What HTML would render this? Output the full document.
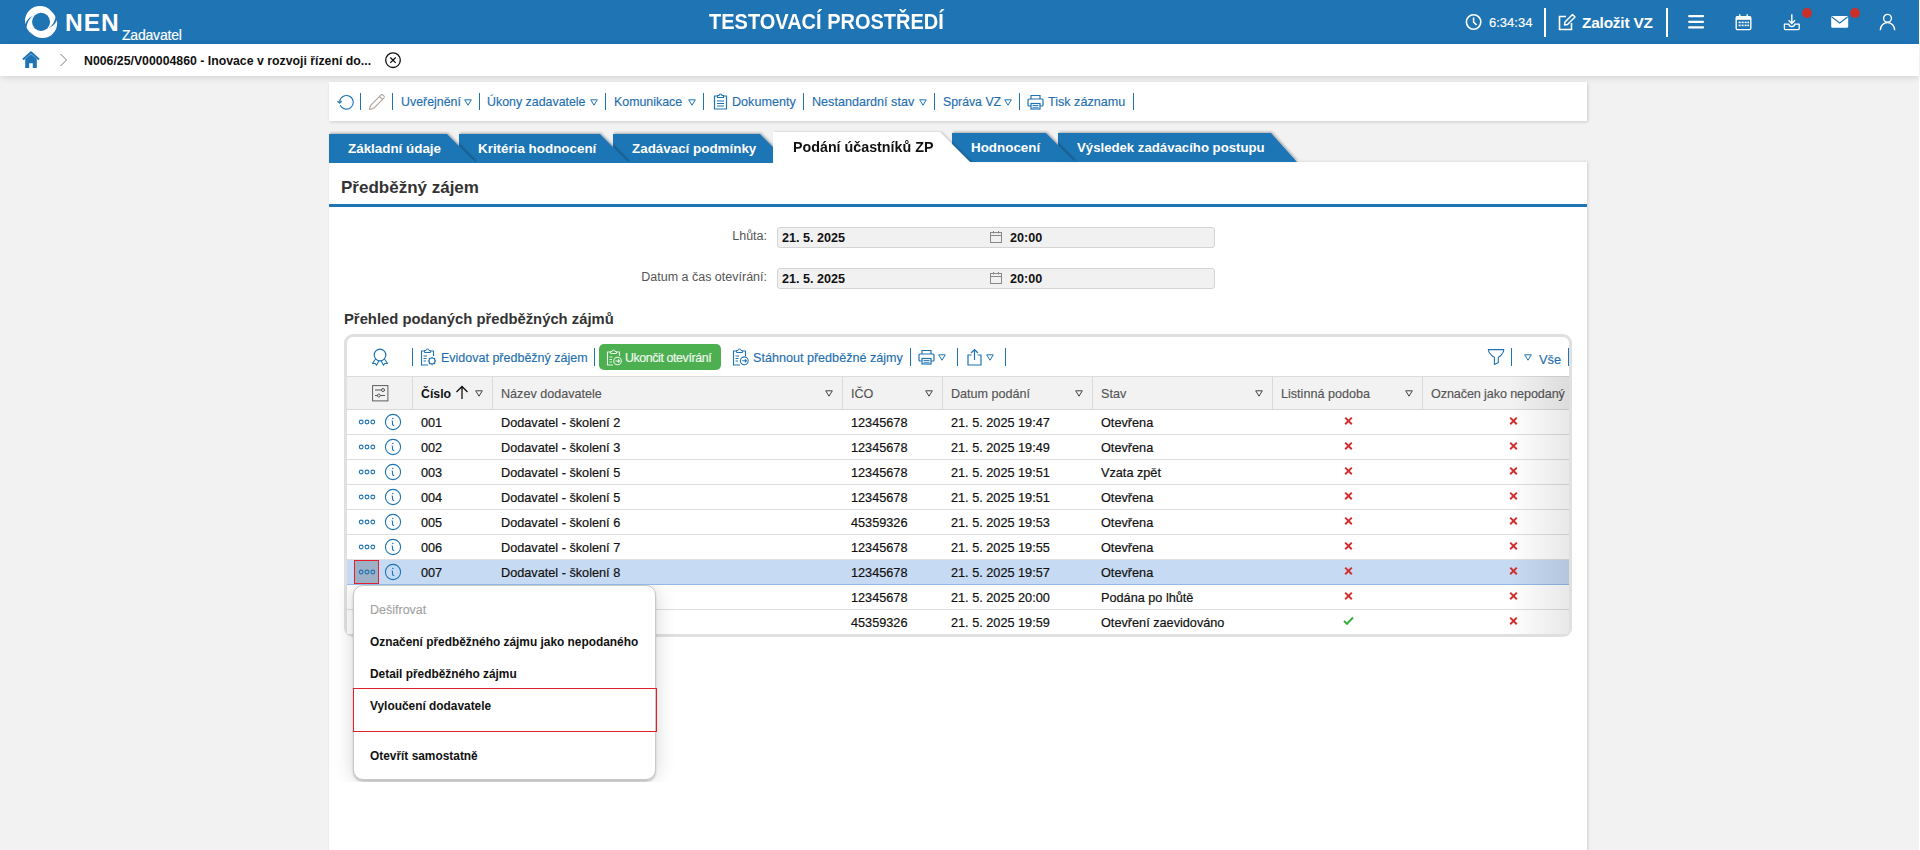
<!DOCTYPE html>
<html><head><meta charset="utf-8">
<style>
*{box-sizing:border-box;margin:0;padding:0}
html,body{width:1920px;height:850px;overflow:hidden}
body{background:#f2f2f2;font-family:"Liberation Sans",sans-serif;position:relative;color:#111}
.a{position:absolute;white-space:nowrap;line-height:normal}
.r{-webkit-text-stroke:0.2px currentColor}
</style></head>
<body>
<div class="a" style="left:0;top:0;width:1919px;height:44px;background:#1f74b4"></div>
<div class="a" style="left:1919px;top:0;width:1px;height:850px;background:#fff"></div>
<div class="a" style="left:0;top:44px;width:1919px;height:32px;background:#fff;box-shadow:0 2px 6px rgba(0,0,0,.12)"></div>
<svg class="a" style="left:0;top:0" width="70" height="44">
  <circle cx="40.0" cy="21.07" r="15.07" fill="#fff"/>
  <circle cx="42.46" cy="23.33" r="14.69" fill="#fff"/>
  <path id="lg" d="M24.4 26.8Q25.6 19.2 33.4 15.4Q27.3 19.8 26.2 28.4L25.2 30.5Z" fill="#1f74b4"/>
  <path d="M24.4 26.8Q25.6 19.2 33.4 15.4Q27.3 19.8 26.2 28.4L25.2 30.5Z" fill="#1f74b4" transform="rotate(180 41.05 21.87)"/>
  <circle cx="41.05" cy="21.87" r="9.04" fill="#1f74b4"/>
</svg>
<div class="a" style="left:65px;top:9px;font-size:24.5px;color:#fff;font-weight:bold;letter-spacing:1px">NEN</div>
<div class="a" style="left:122px;top:27px;font-size:14px;color:#fff;font-weight:normal;letter-spacing:-0.2px;-webkit-text-stroke:0.15px #fff">Zadavatel</div>
<div class="a" style="left:709px;top:10px;font-size:21.5px;color:#fff;font-weight:bold;transform:scaleX(0.93);transform-origin:0 0">TESTOVACÍ PROSTŘEDÍ</div>
<svg class="a" style="left:1465px;top:13px" width="18" height="18" viewBox="0 0 18 18"><circle cx="8.6" cy="9" r="7.2" stroke="#fff" stroke-width="1.6" fill="none"/><path d="M8.6 4.6V9.2L11.6 12" stroke="#fff" stroke-width="1.6" fill="none"/></svg>
<div class="a" style="left:1489px;top:15px;font-size:13px;color:#fff;font-weight:normal;;-webkit-text-stroke:0.15px #fff">6:34:34</div>
<div class="a" style="left:1544px;top:8px;width:2px;height:29px;background:#fff"></div>
<svg class="a" style="left:1557px;top:13px" width="20" height="18" viewBox="0 0 20 18"><path d="M9 3.5H2.5V16.5H14.5V10" stroke="#fff" stroke-width="1.6" fill="none"/><path d="M7.5 12L8 9 15.5 1.5 18 4 10.5 11.5Z" stroke="#fff" stroke-width="1.5" fill="none" stroke-linejoin="round"/></svg>
<div class="a" style="left:1582px;top:14px;font-size:15.4px;color:#fff;font-weight:bold;letter-spacing:-0.2px">Založit VZ</div>
<div class="a" style="left:1666px;top:8px;width:2px;height:29px;background:#fff"></div>
<svg class="a" style="left:1687px;top:14px" width="18" height="16" viewBox="0 0 18 16"><path d="M2.2 2.2H16M2.2 7.8H16M2.2 13.4H16" stroke="#fff" stroke-width="2.3" stroke-linecap="round"/></svg>
<svg class="a" style="left:1735px;top:13px" width="17" height="18" viewBox="0 0 17 18"><rect x="1.2" y="3.6" width="14.6" height="13" rx="1.3" fill="none" stroke="#fff" stroke-width="1.4"/><rect x="1.2" y="3.6" width="14.6" height="3.2" fill="#fff"/><path d="M4.8 1.2V4.5M12.2 1.2V4.5" stroke="#fff" stroke-width="1.4"/><g fill="#fff"><rect x="3.6" y="8.6" width="2" height="1.6"/><rect x="6.6" y="8.6" width="2" height="1.6"/><rect x="9.6" y="8.6" width="2" height="1.6"/><rect x="12.4" y="8.6" width="1.6" height="1.6"/><rect x="3.6" y="11.6" width="2" height="1.6"/><rect x="6.6" y="11.6" width="2" height="1.6"/><rect x="9.6" y="11.6" width="2" height="1.6"/><rect x="12.4" y="11.6" width="1.6" height="1.6"/></g></svg>
<svg class="a" style="left:1783px;top:13px" width="18" height="18" viewBox="0 0 18 18"><path d="M8.8 1.2V10.2M5.6 7.2L8.8 10.4 12 7.2" stroke="#fff" stroke-width="1.4" fill="none"/><path d="M1.4 11.2V15.6Q1.4 16.6 2.4 16.6H15.2Q16.2 16.6 16.2 15.6V11.2H11.8Q11.5 13.6 8.8 13.6 6.1 13.6 5.8 11.2Z" stroke="#fff" stroke-width="1.3" fill="none" stroke-linejoin="round"/></svg>
<div class="a" style="left:1802px;top:8px;width:10px;height:10px;border-radius:50%;background:#c9302c"></div>
<svg class="a" style="left:1831px;top:15px" width="18" height="14" viewBox="0 0 18 14"><rect x="0.2" y="1" width="17" height="11.8" rx="1.5" fill="#fff"/><path d="M0.8 2L8.7 8 16.6 2" stroke="#1f74b4" stroke-width="1.2" fill="none"/></svg>
<div class="a" style="left:1850px;top:8px;width:10px;height:10px;border-radius:50%;background:#c9302c"></div>
<svg class="a" style="left:1879px;top:13px" width="17" height="18" viewBox="0 0 17 18"><circle cx="8.5" cy="5.3" r="3.9" stroke="#fff" stroke-width="1.4" fill="none"/><path d="M1.3 17.2A7.2 7.6 0 0 1 15.7 17.2" stroke="#fff" stroke-width="1.4" fill="none"/></svg>
<svg class="a" style="left:22px;top:51px" width="18" height="18" viewBox="0 0 18 18"><path d="M1 8.5L9 1.2 17 8.5" stroke="#1f74b4" stroke-width="2" fill="none" stroke-linejoin="round"/><path d="M3.2 8V17H7.2V12.2H10.8V17H14.8V8L9 3Z" fill="#1f74b4"/></svg>
<svg class="a" style="left:59px;top:53px" width="10" height="14" viewBox="0 0 10 14"><path d="M1.5 1L7.5 7 1.5 13" stroke="#777" stroke-width="1" fill="none"/></svg>
<div class="a" style="left:84px;top:54px;font-size:12.3px;color:#111;font-weight:bold;">N006/25/V00004860 - Inovace v rozvoji řízení do...</div>
<svg class="a" style="left:384px;top:51px" width="18" height="18" viewBox="0 0 18 18"><circle cx="9" cy="9.2" r="7.3" stroke="#111" stroke-width="1.3" fill="none"/><path d="M6.3 6.5L11.7 11.9M11.7 6.5L6.3 11.9" stroke="#111" stroke-width="1.3"/></svg>
<div class="a" style="left:329px;top:82px;width:1258px;height:39px;background:#fff;box-shadow:1px 1px 3px rgba(0,0,0,0.16)"></div>
<svg class="a" style="left:336px;top:93px" width="18" height="18" viewBox="0 0 18 18"><path d="M3.7 8.2A6.8 6.8 0 1 1 4.2 12.1" stroke="#1f74b4" stroke-width="1.1" fill="none"/><path d="M1.2 8.4L3.7 10.6 6 8.4Z" fill="#1f74b4" stroke="#1f74b4" stroke-width="0.6" stroke-linejoin="round"/></svg>
<div class="a" style="left:360px;top:93px;width:1px;height:17px;background:#1f74b4"></div>
<svg class="a" style="left:368px;top:93px" width="18" height="18" viewBox="0 0 18 18"><path d="M1.5 16.5L2.5 12.5 12.8 2.2Q14 1 15.3 2.3L15.7 2.7Q17 4 15.8 5.2L5.5 15.5Z M11.5 3.5L14.5 6.5" stroke="#b0a8a0" stroke-width="1.1" fill="none" stroke-linejoin="round"/></svg>
<div class="a" style="left:392px;top:93px;width:1px;height:17px;background:#1f74b4"></div>
<div class="a" style="left:401px;top:95px;font-size:12.4px;color:#1f6fb0;font-weight:normal;;-webkit-text-stroke:0.15px #1f6fb0">Uveřejnění</div>
<svg class="a" style="left:464px;top:99px" width="8" height="7" viewBox="0 0 8 7"><path d="M0.7 0.8H7.3L4 6.2Z" stroke="#1f74b4" stroke-width="1" fill="none"/></svg>
<div class="a" style="left:479px;top:93px;width:1px;height:17px;background:#1f74b4"></div>
<div class="a" style="left:487px;top:95px;font-size:12.4px;color:#1f6fb0;font-weight:normal;;-webkit-text-stroke:0.15px #1f6fb0">Úkony zadavatele</div>
<svg class="a" style="left:590px;top:99px" width="8" height="7" viewBox="0 0 8 7"><path d="M0.7 0.8H7.3L4 6.2Z" stroke="#1f74b4" stroke-width="1" fill="none"/></svg>
<div class="a" style="left:605px;top:93px;width:1px;height:17px;background:#1f74b4"></div>
<div class="a" style="left:614px;top:95px;font-size:12.4px;color:#1f6fb0;font-weight:normal;;-webkit-text-stroke:0.15px #1f6fb0">Komunikace</div>
<svg class="a" style="left:688px;top:99px" width="8" height="7" viewBox="0 0 8 7"><path d="M0.7 0.8H7.3L4 6.2Z" stroke="#1f74b4" stroke-width="1" fill="none"/></svg>
<div class="a" style="left:703px;top:93px;width:1px;height:17px;background:#1f74b4"></div>
<svg class="a" style="left:713px;top:93px" width="15" height="17" viewBox="0 0 15 17"><path d="M4.5 3H1.5V16H13.5V3H10.5" stroke="#1f74b4" stroke-width="1.2" fill="none"/><path d="M4.5 4.5V2.5H6A1.5 1.5 0 0 1 9 2.5H10.5V4.5Z" stroke="#1f74b4" stroke-width="1.1" fill="none"/><path d="M4 8H11M4 10.5H11M4 13H11" stroke="#1f74b4" stroke-width="1.1"/></svg>
<div class="a" style="left:732px;top:95px;font-size:12.6px;color:#1f6fb0;font-weight:normal;;-webkit-text-stroke:0.15px #1f6fb0">Dokumenty</div>
<div class="a" style="left:803px;top:93px;width:1px;height:17px;background:#1f74b4"></div>
<div class="a" style="left:812px;top:95px;font-size:12.6px;color:#1f6fb0;font-weight:normal;;-webkit-text-stroke:0.15px #1f6fb0">Nestandardní stav</div>
<svg class="a" style="left:919px;top:99px" width="8" height="7" viewBox="0 0 8 7"><path d="M0.7 0.8H7.3L4 6.2Z" stroke="#1f74b4" stroke-width="1" fill="none"/></svg>
<div class="a" style="left:934px;top:93px;width:1px;height:17px;background:#1f74b4"></div>
<div class="a" style="left:943px;top:95px;font-size:12.3px;color:#1f6fb0;font-weight:normal;;-webkit-text-stroke:0.15px #1f6fb0">Správa VZ</div>
<svg class="a" style="left:1004px;top:99px" width="8" height="7" viewBox="0 0 8 7"><path d="M0.7 0.8H7.3L4 6.2Z" stroke="#1f74b4" stroke-width="1" fill="none"/></svg>
<div class="a" style="left:1019px;top:93px;width:1px;height:17px;background:#1f74b4"></div>
<svg class="a" style="left:1027px;top:94px" width="17" height="16" viewBox="0 0 17 16"><path d="M4 5V1.5H13V5" stroke="#1f74b4" stroke-width="1.2" fill="none"/><rect x="1" y="5" width="15" height="7" rx="1" stroke="#1f74b4" stroke-width="1.2" fill="none"/><rect x="4" y="9.5" width="9" height="5.5" stroke="#1f74b4" stroke-width="1.2" fill="#fff"/><path d="M5.5 11.5H11.5M5.5 13.3H11.5" stroke="#1f74b4" stroke-width="0.9"/></svg>
<div class="a" style="left:1048px;top:95px;font-size:12.6px;color:#1f6fb0;font-weight:normal;;-webkit-text-stroke:0.15px #1f6fb0">Tisk záznamu</div>
<div class="a" style="left:1133px;top:93px;width:1px;height:17px;background:#1f74b4"></div>
<div class="a" style="left:329px;top:162px;width:1258px;height:700px;background:#fff;box-shadow:1px 0 3px rgba(0,0,0,0.14)"></div>
<svg class="a" style="left:320px;top:120px" width="1000" height="43" viewBox="320 120 1000 43">
  <defs><filter id="ds" x="-10%" y="-50%" width="120%" height="200%"><feDropShadow dx="1" dy="-1.2" stdDeviation="1.1" flood-color="#000" flood-opacity="0.28"/></filter><filter id="ds2" x="-10%" y="-50%" width="120%" height="200%"><feDropShadow dx="1.5" dy="0" stdDeviation="1.1" flood-color="#000" flood-opacity="0.22"/></filter></defs>
  <polygon points="1058,133 1271,133 1297,162 1058,162" fill="#1f74b4" filter="url(#ds)"/>
  <polygon points="952,133 1046,133 1075,162 952,162" fill="#1f74b4" filter="url(#ds)"/>
  <polygon points="613,134 760,134 789,163 613,163" fill="#1f74b4" filter="url(#ds)"/>
  <polygon points="459,134 600,134 629,163 459,163" fill="#1f74b4" filter="url(#ds)"/>
  <polygon points="329,134 447,134 476,163 329,163" fill="#1f74b4" filter="url(#ds)"/>
  <polygon points="773,132 940,132 971,163 773,163" fill="#fff" filter="url(#ds2)"/>
</svg>
<div class="a" style="left:348px;top:141px;font-size:13.4px;color:#fff;font-weight:bold;">Základní údaje</div>
<div class="a" style="left:478px;top:141px;font-size:13.4px;color:#fff;font-weight:bold;">Kritéria hodnocení</div>
<div class="a" style="left:632px;top:141px;font-size:13.4px;color:#fff;font-weight:bold;">Zadávací podmínky</div>
<div class="a" style="left:971px;top:140px;font-size:13.4px;color:#fff;font-weight:bold;">Hodnocení</div>
<div class="a" style="left:1077px;top:140px;font-size:13.2px;color:#fff;font-weight:bold;">Výsledek zadávacího postupu</div>
<div class="a" style="left:793px;top:138px;font-size:15.2px;color:#111;font-weight:bold;transform:scaleX(0.94);transform-origin:0 0">Podání účastníků ZP</div>
<div class="a" style="left:341px;top:178px;font-size:17px;color:#333;font-weight:bold;">Předběžný zájem</div>
<div class="a" style="left:329px;top:204px;width:1258px;height:3px;background:#1f74b4"></div>
<div class="a" style="left:700px;top:229px;width:67px;text-align:right;font-size:12.5px;color:#555">Lhůta:</div>
<div class="a" style="left:777px;top:227px;width:438px;height:21px;background:#f1f1f1;border:1px solid #d4d4d4;border-radius:3px"></div>
<div class="a" style="left:782px;top:231px;font-size:12.6px;color:#111;font-weight:bold;">21. 5. 2025</div>
<svg class="a" style="left:989px;top:230px" width="14" height="14" viewBox="0 0 14 14"><rect x="1.5" y="2.5" width="11" height="10" stroke="#888" stroke-width="1" fill="none"/><path d="M1.5 5.5H12.5M4.5 1V3.5M9.5 1V3.5" stroke="#888" stroke-width="1"/></svg>
<div class="a" style="left:1010px;top:231px;font-size:12.6px;color:#111;font-weight:bold;">20:00</div>
<div class="a" style="left:600px;top:270px;width:167px;text-align:right;font-size:12.5px;color:#555">Datum a čas otevírání:</div>
<div class="a" style="left:777px;top:268px;width:438px;height:21px;background:#f1f1f1;border:1px solid #d4d4d4;border-radius:3px"></div>
<div class="a" style="left:782px;top:272px;font-size:12.6px;color:#111;font-weight:bold;">21. 5. 2025</div>
<svg class="a" style="left:989px;top:271px" width="14" height="14" viewBox="0 0 14 14"><rect x="1.5" y="2.5" width="11" height="10" stroke="#888" stroke-width="1" fill="none"/><path d="M1.5 5.5H12.5M4.5 1V3.5M9.5 1V3.5" stroke="#888" stroke-width="1"/></svg>
<div class="a" style="left:1010px;top:272px;font-size:12.6px;color:#111;font-weight:bold;">20:00</div>
<div class="a" style="left:344px;top:311px;font-size:14.8px;color:#333;font-weight:bold;">Přehled podaných předběžných zájmů</div>
<div class="a" style="left:344px;top:334px;width:1228px;height:303px;border:3px solid #e0e0e0;border-radius:9px;background:#fff"></div>
<svg class="a" style="left:371px;top:348px" width="18" height="18" viewBox="0 0 18 18"><circle cx="9" cy="7" r="5.8" stroke="#1f74b4" stroke-width="1.2" fill="none"/><path d="M4.5 11L1.5 15.5H4.3L5.5 17.3 8 12.8M13.5 11L16.5 15.5H13.7L12.5 17.3 10 12.8" stroke="#1f74b4" stroke-width="1.1" fill="none" stroke-linejoin="round"/></svg>
<div class="a" style="left:412px;top:348px;width:1px;height:18px;background:#1f74b4"></div>
<svg class="a" style="left:420px;top:348px" width="18" height="18" viewBox="0 0 18 18"><path d="M4.5 3H1.5V17H8" stroke="#1f74b4" stroke-width="1.1" fill="none"/><path d="M10.5 3H13.5V8" stroke="#1f74b4" stroke-width="1.1" fill="none"/><path d="M4.5 4.5V2.5H6A1.5 1.5 0 0 1 9 2.5H10.5V4.5Z" stroke="#1f74b4" stroke-width="1" fill="none"/><path d="M3.5 8H7M3.5 10.5H6.5M3.5 13H6" stroke="#1f74b4" stroke-width="1.1"/><circle cx="12" cy="13" r="3" stroke="#1f74b4" stroke-width="1.1" fill="none"/><path d="M12 8.8V10M12 16V17.2M7.8 13H9M15 13H16.2M9 10L9.8 10.8M14.2 15.2L15 16M15 10L14.2 10.8M9.8 15.2L9 16" stroke="#1f74b4" stroke-width="1.1"/></svg>
<div class="a" style="left:441px;top:351px;font-size:12.5px;color:#1f6fb0;font-weight:normal;;-webkit-text-stroke:0.15px #1f6fb0">Evidovat předběžný zájem</div>
<div class="a" style="left:594px;top:348px;width:1px;height:18px;background:#1f74b4"></div>
<div class="a" style="left:599px;top:344px;width:122px;height:26px;background:#4caf50;border-radius:5px"></div>
<svg class="a" style="left:606px;top:349px" width="17" height="17" viewBox="0 0 17 17"><path d="M4.5 3H1.5V16H7" stroke="#e8f5e9" stroke-width="1.1" fill="none"/><path d="M10.5 3H13.5V7" stroke="#e8f5e9" stroke-width="1.1" fill="none"/><path d="M4.5 4.5V2.5H6A1.5 1.5 0 0 1 9 2.5H10.5V4.5Z" stroke="#e8f5e9" stroke-width="1" fill="none"/><path d="M3.5 8H6.5M3.5 10.5H6M3.5 13H6" stroke="#e8f5e9" stroke-width="1.1"/><circle cx="11.5" cy="12" r="3.8" stroke="#e8f5e9" stroke-width="1.1" fill="none"/><path d="M9.5 12H13.5M12 10.5L13.5 12 12 13.5" stroke="#e8f5e9" stroke-width="1.1" fill="none"/></svg>
<div class="a" style="left:625px;top:351px;font-size:12.4px;color:#f1f8f1;font-weight:normal;letter-spacing:-0.4px;-webkit-text-stroke:0.15px #f1f8f1">Ukončit otevírání</div>
<svg class="a" style="left:732px;top:348px" width="18" height="18" viewBox="0 0 18 18"><path d="M4.5 3H1.5V17H8" stroke="#1f74b4" stroke-width="1.1" fill="none"/><path d="M10.5 3H13.5V8" stroke="#1f74b4" stroke-width="1.1" fill="none"/><path d="M4.5 4.5V2.5H6A1.5 1.5 0 0 1 9 2.5H10.5V4.5Z" stroke="#1f74b4" stroke-width="1" fill="none"/><path d="M3.5 8H7M3.5 10.5H6.5M3.5 13H6" stroke="#1f74b4" stroke-width="1.1"/><circle cx="12.3" cy="12.8" r="3.9" stroke="#1f74b4" stroke-width="1.1" fill="none"/><path d="M10.2 12.8H14.4M12.9 11.3L14.4 12.8 12.9 14.3" stroke="#1f74b4" stroke-width="1.1" fill="none"/></svg>
<div class="a" style="left:753px;top:351px;font-size:12.6px;color:#1f6fb0;font-weight:normal;;-webkit-text-stroke:0.15px #1f6fb0">Stáhnout předběžné zájmy</div>
<div class="a" style="left:910px;top:348px;width:1px;height:18px;background:#1f74b4"></div>
<svg class="a" style="left:918px;top:349px" width="17" height="16" viewBox="0 0 17 16"><path d="M4 5V1.5H13V5" stroke="#1f74b4" stroke-width="1.2" fill="none"/><rect x="1" y="5" width="15" height="7" rx="1" stroke="#1f74b4" stroke-width="1.2" fill="none"/><rect x="4" y="9.5" width="9" height="5.5" stroke="#1f74b4" stroke-width="1.2" fill="#fff"/><path d="M5.5 11.5H11.5M5.5 13.3H11.5" stroke="#1f74b4" stroke-width="0.9"/></svg>
<svg class="a" style="left:938px;top:354px" width="8" height="7" viewBox="0 0 8 7"><path d="M0.7 0.8H7.3L4 6.2Z" stroke="#1f74b4" stroke-width="1" fill="none"/></svg>
<div class="a" style="left:957px;top:348px;width:1px;height:18px;background:#1f74b4"></div>
<svg class="a" style="left:966px;top:348px" width="17" height="18" viewBox="0 0 17 18"><path d="M5.5 7H2V17H15V7H11.5" stroke="#1f74b4" stroke-width="1.2" fill="none"/><path d="M8.5 12V1.5M5 5L8.5 1.5 12 5" stroke="#1f74b4" stroke-width="1.2" fill="none"/></svg>
<svg class="a" style="left:986px;top:354px" width="8" height="7" viewBox="0 0 8 7"><path d="M0.7 0.8H7.3L4 6.2Z" stroke="#1f74b4" stroke-width="1" fill="none"/></svg>
<div class="a" style="left:1005px;top:348px;width:1px;height:18px;background:#1f74b4"></div>
<svg class="a" style="left:1487px;top:348px" width="18" height="18" viewBox="0 0 18 18"><path d="M1.3 1.6H16.8Q16.9 4.2 14.6 6.6Q13.1 8.5 11.3 9.2V14.4L7.4 16.5V9.2Q5.6 8.5 4 6.6Q1.2 4.2 1.3 1.6Z" stroke="#1f74b4" stroke-width="1.1" fill="none" stroke-linejoin="round"/></svg>
<div class="a" style="left:1511px;top:348px;width:1px;height:18px;background:#1f74b4"></div>
<svg class="a" style="left:1524px;top:354px" width="8" height="7" viewBox="0 0 8 7"><path d="M0.7 0.8H7.3L4 6.2Z" stroke="#1f74b4" stroke-width="1" fill="none"/></svg>
<div class="a" style="left:1539px;top:352px;font-size:12.8px;color:#1f6fb0;font-weight:normal;;-webkit-text-stroke:0.15px #1f6fb0">Vše</div>
<div class="a" style="left:1568px;top:348px;width:1px;height:18px;background:#1f74b4"></div>
<div class="a" style="left:347px;top:376px;width:1222px;height:34px;background:#f2f2f2;border-top:1px solid #dcdcdc;border-bottom:1px solid #d8d8d8"></div>
<div class="a" style="left:412px;top:377px;width:1px;height:32px;background:#dadada"></div>
<div class="a" style="left:492px;top:377px;width:1px;height:32px;background:#dadada"></div>
<div class="a" style="left:842px;top:377px;width:1px;height:32px;background:#dadada"></div>
<div class="a" style="left:942px;top:377px;width:1px;height:32px;background:#dadada"></div>
<div class="a" style="left:1092px;top:377px;width:1px;height:32px;background:#dadada"></div>
<div class="a" style="left:1272px;top:377px;width:1px;height:32px;background:#dadada"></div>
<div class="a" style="left:1422px;top:377px;width:1px;height:32px;background:#dadada"></div>
<svg class="a" style="left:372px;top:385px" width="17" height="17" viewBox="0 0 17 17"><rect x="0.6" y="0.6" width="15.3" height="15.3" stroke="#555" stroke-width="0.95" fill="none"/><path d="M3 5H13M3 10.5H13" stroke="#555" stroke-width="1"/><circle cx="11" cy="5" r="1.5" fill="#f2f2f2" stroke="#555" stroke-width="1"/><circle cx="6.8" cy="10.5" r="1.5" fill="#f2f2f2" stroke="#555" stroke-width="1"/></svg>
<div class="a" style="left:421px;top:387px;font-size:12.3px;color:#111;font-weight:bold;">Číslo</div>
<svg class="a" style="left:455px;top:385px" width="14" height="15" viewBox="0 0 14 15"><path d="M7 14V1.5M1.5 7L7 1.5 12.5 7" stroke="#111" stroke-width="1.3" fill="none"/></svg>
<svg class="a" style="left:475px;top:390px" width="8" height="7" viewBox="0 0 8 7"><path d="M0.7 0.8H7.3L4 6.2Z" stroke="#444" stroke-width="1" fill="none"/></svg>
<div class="a" style="left:501px;top:387px;font-size:12.6px;color:#555;font-weight:normal;;-webkit-text-stroke:0.15px #555">Název dodavatele</div>
<svg class="a" style="left:825px;top:390px" width="8" height="7" viewBox="0 0 8 7"><path d="M0.7 0.8H7.3L4 6.2Z" stroke="#444" stroke-width="1" fill="none"/></svg>
<div class="a" style="left:851px;top:387px;font-size:12.6px;color:#555;font-weight:normal;;-webkit-text-stroke:0.15px #555">IČO</div>
<svg class="a" style="left:925px;top:390px" width="8" height="7" viewBox="0 0 8 7"><path d="M0.7 0.8H7.3L4 6.2Z" stroke="#444" stroke-width="1" fill="none"/></svg>
<div class="a" style="left:951px;top:387px;font-size:12.6px;color:#555;font-weight:normal;;-webkit-text-stroke:0.15px #555">Datum podání</div>
<svg class="a" style="left:1075px;top:390px" width="8" height="7" viewBox="0 0 8 7"><path d="M0.7 0.8H7.3L4 6.2Z" stroke="#444" stroke-width="1" fill="none"/></svg>
<div class="a" style="left:1101px;top:387px;font-size:12.6px;color:#555;font-weight:normal;;-webkit-text-stroke:0.15px #555">Stav</div>
<svg class="a" style="left:1255px;top:390px" width="8" height="7" viewBox="0 0 8 7"><path d="M0.7 0.8H7.3L4 6.2Z" stroke="#444" stroke-width="1" fill="none"/></svg>
<div class="a" style="left:1281px;top:387px;font-size:12.6px;color:#555;font-weight:normal;;-webkit-text-stroke:0.15px #555">Listinná podoba</div>
<svg class="a" style="left:1405px;top:390px" width="8" height="7" viewBox="0 0 8 7"><path d="M0.7 0.8H7.3L4 6.2Z" stroke="#444" stroke-width="1" fill="none"/></svg>
<div class="a" style="left:1431px;top:387px;font-size:12.6px;color:#555;font-weight:normal;letter-spacing:-0.1px;-webkit-text-stroke:0.15px #555">Označen jako nepodaný</div>
<div class="a" style="left:347px;top:410px;width:1222px;height:25px;background:#fff;border-bottom:1px solid #dedede"></div>
<svg class="a" style="left:358px;top:418px" width="18" height="8" viewBox="0 0 18 8"><circle cx="3.2" cy="4" r="1.9" stroke="#1f74b4" stroke-width="1.1" fill="none"/><circle cx="9" cy="4" r="1.9" stroke="#1f74b4" stroke-width="1.1" fill="none"/><circle cx="14.8" cy="4" r="1.9" stroke="#1f74b4" stroke-width="1.1" fill="none"/></svg>
<svg class="a" style="left:384px;top:413px" width="18" height="18" viewBox="0 0 18 18"><circle cx="9" cy="9" r="7.6" stroke="#1f74b4" stroke-width="1.1" fill="none"/><circle cx="8.8" cy="5.4" r="0.75" fill="#1f74b4"/><path d="M7.7 7.9Q8.5 7.8 8.5 9V11.2Q8.5 12.4 10.2 12.6" stroke="#1f74b4" stroke-width="1.1" fill="none"/></svg>
<div class="a" style="left:421px;top:416px;font-size:12.7px;color:#111;font-weight:normal;-webkit-text-stroke:0.2px #111">001</div>
<div class="a" style="left:501px;top:416px;font-size:12.7px;color:#111;font-weight:normal;-webkit-text-stroke:0.2px #111">Dodavatel - školení 2</div>
<div class="a" style="left:851px;top:416px;font-size:12.7px;color:#111;font-weight:normal;-webkit-text-stroke:0.2px #111">12345678</div>
<div class="a" style="left:951px;top:416px;font-size:12.7px;color:#111;font-weight:normal;-webkit-text-stroke:0.2px #111">21. 5. 2025 19:47</div>
<div class="a" style="left:1101px;top:416px;font-size:12.7px;color:#111;font-weight:normal;-webkit-text-stroke:0.2px #111">Otevřena</div>
<svg class="a" style="left:1344px;top:416px" width="9" height="9" viewBox="0 0 9 9"><path d="M1.2 1.6L7.8 8.2M7.8 1.6L1.2 8.2" stroke="#d32f2f" stroke-width="2"/></svg>
<svg class="a" style="left:1509px;top:416px" width="9" height="9" viewBox="0 0 9 9"><path d="M1.2 1.6L7.8 8.2M7.8 1.6L1.2 8.2" stroke="#d32f2f" stroke-width="2"/></svg>
<div class="a" style="left:347px;top:435px;width:1222px;height:25px;background:#fff;border-bottom:1px solid #dedede"></div>
<svg class="a" style="left:358px;top:443px" width="18" height="8" viewBox="0 0 18 8"><circle cx="3.2" cy="4" r="1.9" stroke="#1f74b4" stroke-width="1.1" fill="none"/><circle cx="9" cy="4" r="1.9" stroke="#1f74b4" stroke-width="1.1" fill="none"/><circle cx="14.8" cy="4" r="1.9" stroke="#1f74b4" stroke-width="1.1" fill="none"/></svg>
<svg class="a" style="left:384px;top:438px" width="18" height="18" viewBox="0 0 18 18"><circle cx="9" cy="9" r="7.6" stroke="#1f74b4" stroke-width="1.1" fill="none"/><circle cx="8.8" cy="5.4" r="0.75" fill="#1f74b4"/><path d="M7.7 7.9Q8.5 7.8 8.5 9V11.2Q8.5 12.4 10.2 12.6" stroke="#1f74b4" stroke-width="1.1" fill="none"/></svg>
<div class="a" style="left:421px;top:441px;font-size:12.7px;color:#111;font-weight:normal;-webkit-text-stroke:0.2px #111">002</div>
<div class="a" style="left:501px;top:441px;font-size:12.7px;color:#111;font-weight:normal;-webkit-text-stroke:0.2px #111">Dodavatel - školení 3</div>
<div class="a" style="left:851px;top:441px;font-size:12.7px;color:#111;font-weight:normal;-webkit-text-stroke:0.2px #111">12345678</div>
<div class="a" style="left:951px;top:441px;font-size:12.7px;color:#111;font-weight:normal;-webkit-text-stroke:0.2px #111">21. 5. 2025 19:49</div>
<div class="a" style="left:1101px;top:441px;font-size:12.7px;color:#111;font-weight:normal;-webkit-text-stroke:0.2px #111">Otevřena</div>
<svg class="a" style="left:1344px;top:441px" width="9" height="9" viewBox="0 0 9 9"><path d="M1.2 1.6L7.8 8.2M7.8 1.6L1.2 8.2" stroke="#d32f2f" stroke-width="2"/></svg>
<svg class="a" style="left:1509px;top:441px" width="9" height="9" viewBox="0 0 9 9"><path d="M1.2 1.6L7.8 8.2M7.8 1.6L1.2 8.2" stroke="#d32f2f" stroke-width="2"/></svg>
<div class="a" style="left:347px;top:460px;width:1222px;height:25px;background:#fff;border-bottom:1px solid #dedede"></div>
<svg class="a" style="left:358px;top:468px" width="18" height="8" viewBox="0 0 18 8"><circle cx="3.2" cy="4" r="1.9" stroke="#1f74b4" stroke-width="1.1" fill="none"/><circle cx="9" cy="4" r="1.9" stroke="#1f74b4" stroke-width="1.1" fill="none"/><circle cx="14.8" cy="4" r="1.9" stroke="#1f74b4" stroke-width="1.1" fill="none"/></svg>
<svg class="a" style="left:384px;top:463px" width="18" height="18" viewBox="0 0 18 18"><circle cx="9" cy="9" r="7.6" stroke="#1f74b4" stroke-width="1.1" fill="none"/><circle cx="8.8" cy="5.4" r="0.75" fill="#1f74b4"/><path d="M7.7 7.9Q8.5 7.8 8.5 9V11.2Q8.5 12.4 10.2 12.6" stroke="#1f74b4" stroke-width="1.1" fill="none"/></svg>
<div class="a" style="left:421px;top:466px;font-size:12.7px;color:#111;font-weight:normal;-webkit-text-stroke:0.2px #111">003</div>
<div class="a" style="left:501px;top:466px;font-size:12.7px;color:#111;font-weight:normal;-webkit-text-stroke:0.2px #111">Dodavatel - školení 5</div>
<div class="a" style="left:851px;top:466px;font-size:12.7px;color:#111;font-weight:normal;-webkit-text-stroke:0.2px #111">12345678</div>
<div class="a" style="left:951px;top:466px;font-size:12.7px;color:#111;font-weight:normal;-webkit-text-stroke:0.2px #111">21. 5. 2025 19:51</div>
<div class="a" style="left:1101px;top:466px;font-size:12.7px;color:#111;font-weight:normal;-webkit-text-stroke:0.2px #111">Vzata zpět</div>
<svg class="a" style="left:1344px;top:466px" width="9" height="9" viewBox="0 0 9 9"><path d="M1.2 1.6L7.8 8.2M7.8 1.6L1.2 8.2" stroke="#d32f2f" stroke-width="2"/></svg>
<svg class="a" style="left:1509px;top:466px" width="9" height="9" viewBox="0 0 9 9"><path d="M1.2 1.6L7.8 8.2M7.8 1.6L1.2 8.2" stroke="#d32f2f" stroke-width="2"/></svg>
<div class="a" style="left:347px;top:485px;width:1222px;height:25px;background:#fff;border-bottom:1px solid #dedede"></div>
<svg class="a" style="left:358px;top:493px" width="18" height="8" viewBox="0 0 18 8"><circle cx="3.2" cy="4" r="1.9" stroke="#1f74b4" stroke-width="1.1" fill="none"/><circle cx="9" cy="4" r="1.9" stroke="#1f74b4" stroke-width="1.1" fill="none"/><circle cx="14.8" cy="4" r="1.9" stroke="#1f74b4" stroke-width="1.1" fill="none"/></svg>
<svg class="a" style="left:384px;top:488px" width="18" height="18" viewBox="0 0 18 18"><circle cx="9" cy="9" r="7.6" stroke="#1f74b4" stroke-width="1.1" fill="none"/><circle cx="8.8" cy="5.4" r="0.75" fill="#1f74b4"/><path d="M7.7 7.9Q8.5 7.8 8.5 9V11.2Q8.5 12.4 10.2 12.6" stroke="#1f74b4" stroke-width="1.1" fill="none"/></svg>
<div class="a" style="left:421px;top:491px;font-size:12.7px;color:#111;font-weight:normal;-webkit-text-stroke:0.2px #111">004</div>
<div class="a" style="left:501px;top:491px;font-size:12.7px;color:#111;font-weight:normal;-webkit-text-stroke:0.2px #111">Dodavatel - školení 5</div>
<div class="a" style="left:851px;top:491px;font-size:12.7px;color:#111;font-weight:normal;-webkit-text-stroke:0.2px #111">12345678</div>
<div class="a" style="left:951px;top:491px;font-size:12.7px;color:#111;font-weight:normal;-webkit-text-stroke:0.2px #111">21. 5. 2025 19:51</div>
<div class="a" style="left:1101px;top:491px;font-size:12.7px;color:#111;font-weight:normal;-webkit-text-stroke:0.2px #111">Otevřena</div>
<svg class="a" style="left:1344px;top:491px" width="9" height="9" viewBox="0 0 9 9"><path d="M1.2 1.6L7.8 8.2M7.8 1.6L1.2 8.2" stroke="#d32f2f" stroke-width="2"/></svg>
<svg class="a" style="left:1509px;top:491px" width="9" height="9" viewBox="0 0 9 9"><path d="M1.2 1.6L7.8 8.2M7.8 1.6L1.2 8.2" stroke="#d32f2f" stroke-width="2"/></svg>
<div class="a" style="left:347px;top:510px;width:1222px;height:25px;background:#fff;border-bottom:1px solid #dedede"></div>
<svg class="a" style="left:358px;top:518px" width="18" height="8" viewBox="0 0 18 8"><circle cx="3.2" cy="4" r="1.9" stroke="#1f74b4" stroke-width="1.1" fill="none"/><circle cx="9" cy="4" r="1.9" stroke="#1f74b4" stroke-width="1.1" fill="none"/><circle cx="14.8" cy="4" r="1.9" stroke="#1f74b4" stroke-width="1.1" fill="none"/></svg>
<svg class="a" style="left:384px;top:513px" width="18" height="18" viewBox="0 0 18 18"><circle cx="9" cy="9" r="7.6" stroke="#1f74b4" stroke-width="1.1" fill="none"/><circle cx="8.8" cy="5.4" r="0.75" fill="#1f74b4"/><path d="M7.7 7.9Q8.5 7.8 8.5 9V11.2Q8.5 12.4 10.2 12.6" stroke="#1f74b4" stroke-width="1.1" fill="none"/></svg>
<div class="a" style="left:421px;top:516px;font-size:12.7px;color:#111;font-weight:normal;-webkit-text-stroke:0.2px #111">005</div>
<div class="a" style="left:501px;top:516px;font-size:12.7px;color:#111;font-weight:normal;-webkit-text-stroke:0.2px #111">Dodavatel - školení 6</div>
<div class="a" style="left:851px;top:516px;font-size:12.7px;color:#111;font-weight:normal;-webkit-text-stroke:0.2px #111">45359326</div>
<div class="a" style="left:951px;top:516px;font-size:12.7px;color:#111;font-weight:normal;-webkit-text-stroke:0.2px #111">21. 5. 2025 19:53</div>
<div class="a" style="left:1101px;top:516px;font-size:12.7px;color:#111;font-weight:normal;-webkit-text-stroke:0.2px #111">Otevřena</div>
<svg class="a" style="left:1344px;top:516px" width="9" height="9" viewBox="0 0 9 9"><path d="M1.2 1.6L7.8 8.2M7.8 1.6L1.2 8.2" stroke="#d32f2f" stroke-width="2"/></svg>
<svg class="a" style="left:1509px;top:516px" width="9" height="9" viewBox="0 0 9 9"><path d="M1.2 1.6L7.8 8.2M7.8 1.6L1.2 8.2" stroke="#d32f2f" stroke-width="2"/></svg>
<div class="a" style="left:347px;top:535px;width:1222px;height:25px;background:#fff;border-bottom:1px solid #dedede"></div>
<svg class="a" style="left:358px;top:543px" width="18" height="8" viewBox="0 0 18 8"><circle cx="3.2" cy="4" r="1.9" stroke="#1f74b4" stroke-width="1.1" fill="none"/><circle cx="9" cy="4" r="1.9" stroke="#1f74b4" stroke-width="1.1" fill="none"/><circle cx="14.8" cy="4" r="1.9" stroke="#1f74b4" stroke-width="1.1" fill="none"/></svg>
<svg class="a" style="left:384px;top:538px" width="18" height="18" viewBox="0 0 18 18"><circle cx="9" cy="9" r="7.6" stroke="#1f74b4" stroke-width="1.1" fill="none"/><circle cx="8.8" cy="5.4" r="0.75" fill="#1f74b4"/><path d="M7.7 7.9Q8.5 7.8 8.5 9V11.2Q8.5 12.4 10.2 12.6" stroke="#1f74b4" stroke-width="1.1" fill="none"/></svg>
<div class="a" style="left:421px;top:541px;font-size:12.7px;color:#111;font-weight:normal;-webkit-text-stroke:0.2px #111">006</div>
<div class="a" style="left:501px;top:541px;font-size:12.7px;color:#111;font-weight:normal;-webkit-text-stroke:0.2px #111">Dodavatel - školení 7</div>
<div class="a" style="left:851px;top:541px;font-size:12.7px;color:#111;font-weight:normal;-webkit-text-stroke:0.2px #111">12345678</div>
<div class="a" style="left:951px;top:541px;font-size:12.7px;color:#111;font-weight:normal;-webkit-text-stroke:0.2px #111">21. 5. 2025 19:55</div>
<div class="a" style="left:1101px;top:541px;font-size:12.7px;color:#111;font-weight:normal;-webkit-text-stroke:0.2px #111">Otevřena</div>
<svg class="a" style="left:1344px;top:541px" width="9" height="9" viewBox="0 0 9 9"><path d="M1.2 1.6L7.8 8.2M7.8 1.6L1.2 8.2" stroke="#d32f2f" stroke-width="2"/></svg>
<svg class="a" style="left:1509px;top:541px" width="9" height="9" viewBox="0 0 9 9"><path d="M1.2 1.6L7.8 8.2M7.8 1.6L1.2 8.2" stroke="#d32f2f" stroke-width="2"/></svg>
<div class="a" style="left:347px;top:560px;width:1222px;height:25px;background:#c6daf3;border-bottom:1px solid #92b9e6"></div>
<div class="a" style="left:354px;top:560px;width:25px;height:24px;background:#9eb0c5;border:1.5px solid #e0202c"></div>
<svg class="a" style="left:358px;top:568px" width="18" height="8" viewBox="0 0 18 8"><circle cx="3.2" cy="4" r="1.9" stroke="#1f74b4" stroke-width="1.1" fill="none"/><circle cx="9" cy="4" r="1.9" stroke="#1f74b4" stroke-width="1.1" fill="none"/><circle cx="14.8" cy="4" r="1.9" stroke="#1f74b4" stroke-width="1.1" fill="none"/></svg>
<svg class="a" style="left:384px;top:563px" width="18" height="18" viewBox="0 0 18 18"><circle cx="9" cy="9" r="7.6" stroke="#1f74b4" stroke-width="1.1" fill="none"/><circle cx="8.8" cy="5.4" r="0.75" fill="#1f74b4"/><path d="M7.7 7.9Q8.5 7.8 8.5 9V11.2Q8.5 12.4 10.2 12.6" stroke="#1f74b4" stroke-width="1.1" fill="none"/></svg>
<div class="a" style="left:421px;top:566px;font-size:12.7px;color:#111;font-weight:normal;-webkit-text-stroke:0.2px #111">007</div>
<div class="a" style="left:501px;top:566px;font-size:12.7px;color:#111;font-weight:normal;-webkit-text-stroke:0.2px #111">Dodavatel - školení 8</div>
<div class="a" style="left:851px;top:566px;font-size:12.7px;color:#111;font-weight:normal;-webkit-text-stroke:0.2px #111">12345678</div>
<div class="a" style="left:951px;top:566px;font-size:12.7px;color:#111;font-weight:normal;-webkit-text-stroke:0.2px #111">21. 5. 2025 19:57</div>
<div class="a" style="left:1101px;top:566px;font-size:12.7px;color:#111;font-weight:normal;-webkit-text-stroke:0.2px #111">Otevřena</div>
<svg class="a" style="left:1344px;top:566px" width="9" height="9" viewBox="0 0 9 9"><path d="M1.2 1.6L7.8 8.2M7.8 1.6L1.2 8.2" stroke="#d32f2f" stroke-width="2"/></svg>
<svg class="a" style="left:1509px;top:566px" width="9" height="9" viewBox="0 0 9 9"><path d="M1.2 1.6L7.8 8.2M7.8 1.6L1.2 8.2" stroke="#d32f2f" stroke-width="2"/></svg>
<div class="a" style="left:347px;top:585px;width:1222px;height:25px;background:#fff;border-bottom:1px solid #dedede"></div>
<svg class="a" style="left:358px;top:593px" width="18" height="8" viewBox="0 0 18 8"><circle cx="3.2" cy="4" r="1.9" stroke="#1f74b4" stroke-width="1.1" fill="none"/><circle cx="9" cy="4" r="1.9" stroke="#1f74b4" stroke-width="1.1" fill="none"/><circle cx="14.8" cy="4" r="1.9" stroke="#1f74b4" stroke-width="1.1" fill="none"/></svg>
<svg class="a" style="left:384px;top:588px" width="18" height="18" viewBox="0 0 18 18"><circle cx="9" cy="9" r="7.6" stroke="#1f74b4" stroke-width="1.1" fill="none"/><circle cx="8.8" cy="5.4" r="0.75" fill="#1f74b4"/><path d="M7.7 7.9Q8.5 7.8 8.5 9V11.2Q8.5 12.4 10.2 12.6" stroke="#1f74b4" stroke-width="1.1" fill="none"/></svg>
<div class="a" style="left:421px;top:591px;font-size:12.7px;color:#111;font-weight:normal;-webkit-text-stroke:0.2px #111">008</div>
<div class="a" style="left:501px;top:591px;font-size:12.7px;color:#111;font-weight:normal;-webkit-text-stroke:0.2px #111">Dodavatel - školení 9</div>
<div class="a" style="left:851px;top:591px;font-size:12.7px;color:#111;font-weight:normal;-webkit-text-stroke:0.2px #111">12345678</div>
<div class="a" style="left:951px;top:591px;font-size:12.7px;color:#111;font-weight:normal;-webkit-text-stroke:0.2px #111">21. 5. 2025 20:00</div>
<div class="a" style="left:1101px;top:591px;font-size:12.7px;color:#111;font-weight:normal;-webkit-text-stroke:0.2px #111">Podána po lhůtě</div>
<svg class="a" style="left:1344px;top:591px" width="9" height="9" viewBox="0 0 9 9"><path d="M1.2 1.6L7.8 8.2M7.8 1.6L1.2 8.2" stroke="#d32f2f" stroke-width="2"/></svg>
<svg class="a" style="left:1509px;top:591px" width="9" height="9" viewBox="0 0 9 9"><path d="M1.2 1.6L7.8 8.2M7.8 1.6L1.2 8.2" stroke="#d32f2f" stroke-width="2"/></svg>
<div class="a" style="left:347px;top:610px;width:1222px;height:25px;background:#fff;border-bottom:1px solid #dedede"></div>
<svg class="a" style="left:358px;top:618px" width="18" height="8" viewBox="0 0 18 8"><circle cx="3.2" cy="4" r="1.9" stroke="#1f74b4" stroke-width="1.1" fill="none"/><circle cx="9" cy="4" r="1.9" stroke="#1f74b4" stroke-width="1.1" fill="none"/><circle cx="14.8" cy="4" r="1.9" stroke="#1f74b4" stroke-width="1.1" fill="none"/></svg>
<svg class="a" style="left:384px;top:613px" width="18" height="18" viewBox="0 0 18 18"><circle cx="9" cy="9" r="7.6" stroke="#1f74b4" stroke-width="1.1" fill="none"/><circle cx="8.8" cy="5.4" r="0.75" fill="#1f74b4"/><path d="M7.7 7.9Q8.5 7.8 8.5 9V11.2Q8.5 12.4 10.2 12.6" stroke="#1f74b4" stroke-width="1.1" fill="none"/></svg>
<div class="a" style="left:421px;top:616px;font-size:12.7px;color:#111;font-weight:normal;-webkit-text-stroke:0.2px #111">009</div>
<div class="a" style="left:501px;top:616px;font-size:12.7px;color:#111;font-weight:normal;-webkit-text-stroke:0.2px #111">Dodavatel - školení 10</div>
<div class="a" style="left:851px;top:616px;font-size:12.7px;color:#111;font-weight:normal;-webkit-text-stroke:0.2px #111">45359326</div>
<div class="a" style="left:951px;top:616px;font-size:12.7px;color:#111;font-weight:normal;-webkit-text-stroke:0.2px #111">21. 5. 2025 19:59</div>
<div class="a" style="left:1101px;top:616px;font-size:12.7px;color:#111;font-weight:normal;-webkit-text-stroke:0.2px #111">Otevření zaevidováno</div>
<svg class="a" style="left:1343px;top:616px" width="11" height="9" viewBox="0 0 11 9"><path d="M1 5L4 7.8 10 1.5" stroke="#3aae3a" stroke-width="2" fill="none"/></svg>
<svg class="a" style="left:1509px;top:616px" width="9" height="9" viewBox="0 0 9 9"><path d="M1.2 1.6L7.8 8.2M7.8 1.6L1.2 8.2" stroke="#d32f2f" stroke-width="2"/></svg>
<div class="a" style="left:1509px;top:376px;width:60px;height:258px;background:linear-gradient(90deg,rgba(0,0,0,0),rgba(0,0,0,0.09))"></div>
<div class="a" style="left:300px;top:585px;width:420px;height:197px;overflow:hidden"><div class="a" style="left:53px;top:0;width:303px;height:195px;background:#fff;border:1px solid #c8c8c8;border-radius:10px;box-shadow:0 0 20px rgba(0,0,0,0.17), 0 2px 2px rgba(0,0,0,0.18)"></div></div>
<div class="a" style="left:370px;top:603px;font-size:12.5px;color:#a3a3a3;font-weight:normal;;-webkit-text-stroke:0.15px #a3a3a3">Dešifrovat</div>
<div class="a" style="left:370px;top:635px;font-size:11.9px;color:#111;font-weight:bold;">Označení předběžného zájmu jako nepodaného</div>
<div class="a" style="left:370px;top:667px;font-size:11.9px;color:#111;font-weight:bold;">Detail předběžného zájmu</div>
<div class="a" style="left:353px;top:688px;width:304px;height:44px;border:1.5px solid #e0202c"></div>
<div class="a" style="left:370px;top:699px;font-size:11.9px;color:#111;font-weight:bold;">Vyloučení dodavatele</div>
<div class="a" style="left:370px;top:749px;font-size:11.9px;color:#111;font-weight:bold;">Otevřít samostatně</div>
</body></html>
